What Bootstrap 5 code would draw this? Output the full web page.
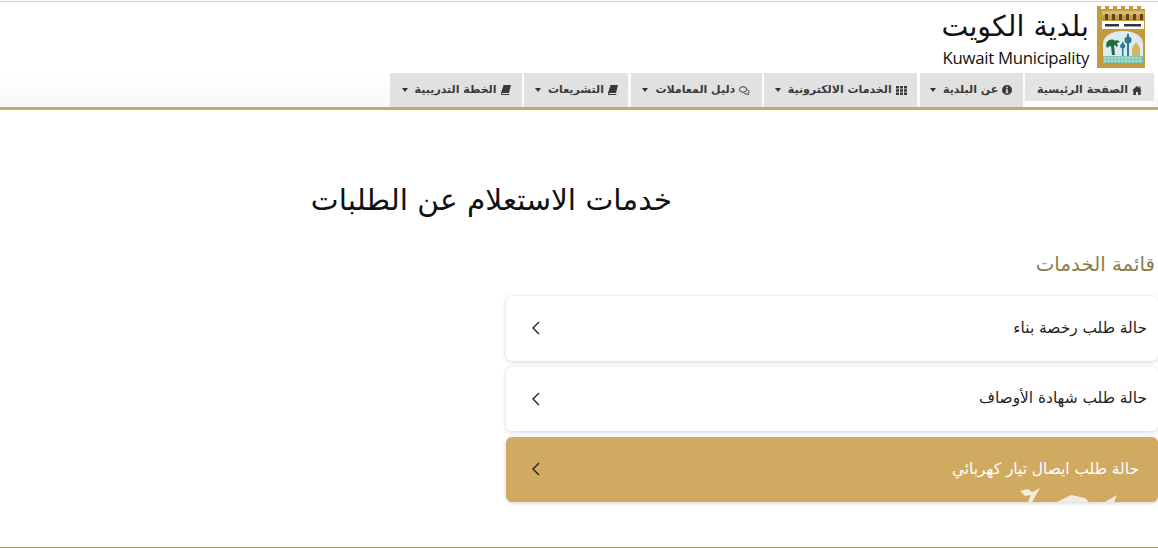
<!DOCTYPE html>
<html lang="ar" dir="rtl">
<head>
<meta charset="utf-8">
<title>خدمات الاستعلام عن الطلبات</title>
<link href="https://cdn.jsdelivr.net/npm/bootstrap@5.3.0/dist/css/bootstrap.min.css" rel="stylesheet">
<style>
html,body{height:548px;overflow:hidden}
body{font-family:"DejaVu Sans","Noto Sans",sans-serif;background:#fff;color:#000;position:relative}
.top-rule{height:2px;background:#fff;border-top:1px solid #cfcfcf;margin-top:1px}
.brand-bar{height:70px;padding:3px 9px 0 0}
.brand-text{padding:5px 8px 0 0;line-height:1}
.brand-ar{font-size:28.5px;line-height:32px;color:#111}
.brand-en{font-family:"Open Sans","Liberation Sans",sans-serif;font-size:16.8px;line-height:20px;margin-top:5px;letter-spacing:-.3px;color:#111;direction:ltr;text-align:right}
.nav-strip{height:37px;border-bottom:3px solid #c9a767;background:linear-gradient(#fff,#f8f8f8);padding-right:4px;gap:2.4px}
.nav-tab{height:34px;background:#e1e1e1;color:#3a3a3a;font-size:11px;font-weight:700;white-space:nowrap;text-decoration:none;gap:4px}
.nav-tab:nth-child(1){width:129px}
.nav-tab:nth-child(2){width:103px}
.nav-tab:nth-child(3){width:153px}
.nav-tab:nth-child(4){width:131px}
.nav-tab:nth-child(5){width:104px}
.nav-tab:nth-child(6){width:132px}
.nav-tab.is-home{background:linear-gradient(#e4e4e4 0,#e4e4e4 28px,#fff 28px)}
.tab-caret{width:0;height:0;border-top:4px solid #333;border-left:3px solid transparent;border-right:3px solid transparent;margin-right:3px}
.page-title{font-size:29.600000000000001px;font-weight:400;line-height:40px;margin:70px 486px 0 0;color:#111}
.list-title{font-size:19.800000000000001px;line-height:24px;margin:33px 3px 0 0;color:#8d7c4a;font-weight:400}
.svc-list{width:652px;margin:19px 0 0 auto;gap:6px}
.svc-item{height:64.5px;border-radius:6px;background:#fff;box-shadow:0 1px 4px rgba(0,0,0,.18);padding:0 11px 0 25px;color:#222;font-size:15.4px;position:relative;overflow:hidden;text-decoration:none}
.svc-item.is-active{background:#d1aa62;color:#fff;padding-right:19px}
.svc-mark{position:absolute;left:514px;bottom:0}
.foot-rule{position:absolute;left:0;right:0;bottom:0;height:1px;background:#a89c4f}
.ic{fill:currentColor;flex:none}
</style>
</head>
<body>
<div class="top-rule"></div>
<div class="brand-bar d-flex justify-content-start">
  <svg width="52" height="62" viewBox="0 0 52 62" class="flex-none">
    <path d="M0 0h4v3h4V0h4v3h4V0h4v3h4V0h4v3h4V0h4v3h4V0h4v3h4V0v62H0z" fill="#c49a3e"/>
    <rect x="5" y="5" width="42" height="4" fill="#d9bb70"/>
    <g fill="#5a4420"><rect x="8" y="8" width="3" height="6"/><rect x="15" y="8" width="3" height="6"/><rect x="22" y="8" width="3" height="6"/><rect x="29" y="8" width="3" height="6"/><rect x="36" y="8" width="3" height="6"/><rect x="43" y="8" width="3" height="6"/></g>
    <rect x="5" y="15" width="42" height="8" fill="#fff"/>
    <rect x="8" y="18" width="14" height="2.500" fill="#333"/><rect x="27" y="18" width="17" height="2.500" fill="#333"/>
    <path d="M6 57V38c0-9 10-13 20-13s20 4 20 13v19z" fill="#dcecee"/>
    <path d="M10 36c3-3 6-3 8-1 1-1 3-1 5 1-2 0-3 1-3 2 1 1 1 2 0 3-1-1-2-2-3-2l1 10h-3l-1-9c-2 0-3 1-4 2-1-2-1-4 0-6z" fill="#1f6b3a"/>
    <rect x="30" y="28" width="2" height="22" fill="#2a7a96"/><circle cx="31" cy="34" r="3.500" fill="#2a7a96"/>
    <rect x="25" y="36" width="1.500" height="14" fill="#2a7a96"/><circle cx="25.700000000000003" cy="40" r="2.500" fill="#2a7a96"/>
    <path d="M35 50V42l4-6 4 6v8z" fill="#d8b45e"/>
    <rect x="6" y="50" width="40" height="7" fill="#7fc7b8"/>
    <path d="M7 52h38M7 55h38" stroke="#e8f5ee" stroke-dasharray="2 1.500"/>
  </svg>
  <div class="brand-text">
    <div class="brand-ar">بلدية الكويت</div>
    <div class="brand-en">Kuwait Municipality</div>
  </div>
</div>
<nav class="nav-strip d-flex align-items-start">
  <a class="nav-tab is-home d-flex align-items-center justify-content-center" href="#"><svg class="ic" width="10" height="9" viewBox="0 0 10 9"><path d="M5 0 0 4.500h1.300V9h2.700V6h2v3h2.700V4.500H10L8.500 3.200V.6H7.300v1.500z"/></svg>الصفحة الرئيسية</a>
  <a class="nav-tab d-flex align-items-center justify-content-center" href="#"><svg class="ic" width="10" height="10" viewBox="0 0 10 10"><path fill-rule="evenodd" d="M5 0a5 5 0 1 0 0 10A5 5 0 0 0 5 0zM4.200 1.800h1.600v1.500H4.200zM3.800 4.200h2v3h.6v1H3.600v-1h.6v-2h-.4z"/></svg>عن البلدية<span class="tab-caret"></span></a>
  <a class="nav-tab d-flex align-items-center justify-content-center" href="#"><svg class="ic" width="11" height="9" viewBox="0 0 11 9"><path d="M0 0h3v2.500H0zM4 0h3v2.500H4zM8 0h3v2.500H8zM0 3.250h3v2.500H0zM4 3.250h3v2.500H4zM8 3.250h3v2.500H8zM0 6.500h3V9H0zM4 6.500h3V9H4zM8 6.500h3V9H8z"/></svg>الخدمات الالكترونية<span class="tab-caret"></span></a>
  <a class="nav-tab d-flex align-items-center justify-content-center" href="#"><svg class="ic chat-ic" width="11" height="9" viewBox="0 0 11 9" stroke="currentColor"><ellipse cx="4" cy="3.500" rx="3.500" ry="2.800" fill="none"/><path d="M8 3.500c2 .5 2.800 2.800 1 4l.5 1-2-.6c-1 .2-2-.2-2.500-1" fill="none"/></svg>دليل المعاملات<span class="tab-caret"></span></a>
  <a class="nav-tab d-flex align-items-center justify-content-center" href="#"><svg class="ic" width="10" height="10" viewBox="0 0 10 10"><path d="M2.500 0H10L8 8H1.500C.8 8 .8 9 1.500 9H8.500L8.300 10H1C0 10-.2 9 0 8z"/></svg>التشريعات<span class="tab-caret"></span></a>
  <a class="nav-tab d-flex align-items-center justify-content-center" href="#"><svg class="ic" width="10" height="10" viewBox="0 0 10 10"><path d="M2.500 0H10L8 8H1.500C.8 8 .8 9 1.500 9H8.500L8.300 10H1C0 10-.2 9 0 8z"/></svg>الخطة التدريبية<span class="tab-caret"></span></a>
</nav>
<h1 class="page-title">خدمات الاستعلام عن الطلبات</h1>
<h2 class="list-title">قائمة الخدمات</h2>
<div class="svc-list d-flex flex-column">
  <a class="svc-item d-flex align-items-center justify-content-between" href="#"><span>حالة طلب رخصة بناء</span><svg width="10" height="14" viewBox="0 0 10 14" fill="none" stroke="#222" stroke-width="1.400"><path d="M8 1 2 7l6 6"/></svg></a>
  <a class="svc-item d-flex align-items-center justify-content-between" href="#"><span>حالة طلب شهادة الأوصاف</span><svg width="10" height="14" viewBox="0 0 10 14" fill="none" stroke="#222" stroke-width="1.400"><path d="M8 1 2 7l6 6"/></svg></a>
  <a class="svc-item is-active d-flex align-items-center justify-content-between" href="#"><span>حالة طلب ايصال تيار كهربائي</span><svg width="10" height="14" viewBox="0 0 10 14" fill="none" stroke="#222" stroke-width="1.400"><path d="M8 1 2 7l6 6"/></svg>
    <svg class="svc-mark" width="100" height="14" viewBox="0 0 100 14" fill="#f3ebdc"><path d="M0 3l8-2 4 3 8-4-8 14H8l3-7-6 1zM37 14l14-7 14 3 4 4zM85 14l12-7-3 7z"/></svg>
  </a>
</div>
<div class="foot-rule"></div>
</body>
</html>
